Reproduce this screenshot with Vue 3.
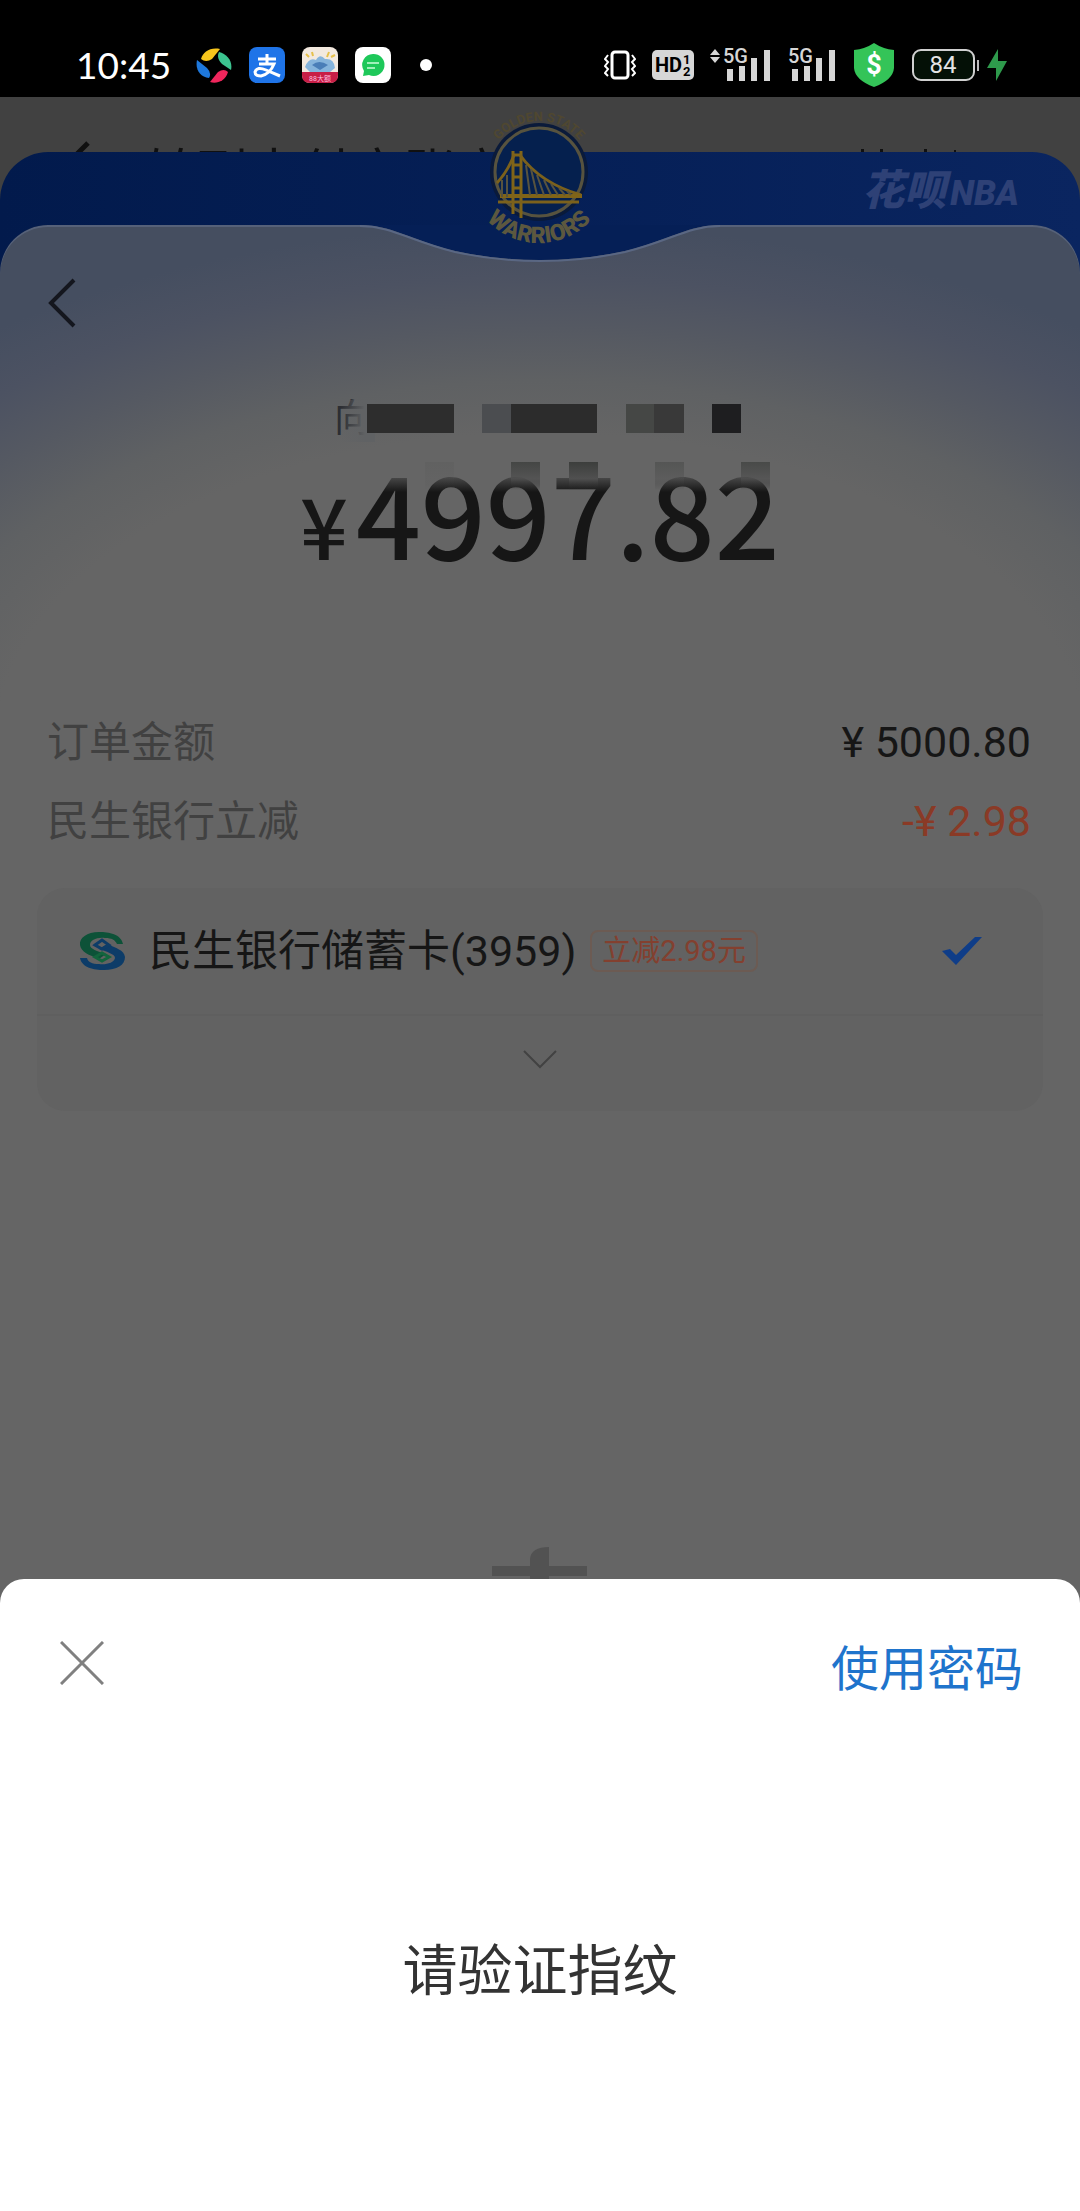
<template>
  <div class="screen">
    <header class="status">
      <div class="status-left">
        <span class="time">10:45</span>
        <svg class="app-icon" viewBox="0 0 36 36">
          <path d="M5 12C7 5 14 0 24 2L16 12Q10 16 5 12Z" fill="#f8c61c" />
          <path d="M23 5C31 7 37 14 35 23L26 17Q20 11 23 5Z" fill="#3cc490" />
          <path d="M14 35C20 37 29 35 32 25Q28 21 22 25Z" fill="#f0265c" />
          <path d="M1 13C-1 22 4 30 13 31Q16 26 11 21Z" fill="#1e78dc" />
        </svg>
        <svg class="app-icon" viewBox="0 0 36 36">
          <rect width="36" height="36" rx="8" fill="#1f74e8" />
          <path d="M9 12H27M18 7V16M10 17H25Q21 27 12 29Q6 29 6 25Q8 19 17 23L31 29" fill="none" stroke="#fff" stroke-width="3" />
        </svg>
        <svg class="app-icon" viewBox="0 0 36 36">
          <rect width="36" height="36" rx="8" fill="#f3e9df" />
          <path d="M4 7l3 3M10 5l1 4M27 5l-2 5M33 8l-4 2" stroke="#e6c04a" stroke-width="2" />
          <path d="M3 20Q7 10 14 13Q18 6 23 12Q32 11 33 21L28 25H8Z" fill="#86b4dc" />
          <path d="M10 18Q17 12 26 18L18 23Z" fill="#4a7eb8" />
          <path d="M0 25H36V28Q36 36 28 36H8Q0 36 0 28Z" fill="#c81e46" />
          <text x="18" y="34" font-size="7" text-anchor="middle" fill="#fbd">88大额</text>
        </svg>
        <svg class="app-icon" viewBox="0 0 36 36">
          <rect width="36" height="36" rx="8" fill="#fff" />
          <path d="M18 7a11 11 0 1 1-4 21l-6 1 1-5A11 11 0 0 1 18 7Z" fill="#1ec85a" />
          <path d="M12 16H24M12 21H20" stroke="#9ff0ba" stroke-width="2" />
        </svg>
        <i class="dot"></i>
      </div>
      <div class="status-right">
        <svg width="32" height="30" viewBox="0 0 32 30">
          <rect x="8" y="2" width="16" height="26" rx="3" fill="none" stroke="#fff" stroke-width="3" />
          <path d="M4 5L1 9L4 12L1 16L4 19L1 23L4 26M28 5L31 9L28 12L31 16L28 19L31 23L28 26" fill="none" stroke="#fff" stroke-width="2" />
        </svg>
        <svg class="hd" width="42" height="30" viewBox="0 0 42 30">
          <rect width="42" height="30" rx="5" fill="#d6d6d6" />
          <text x="3" y="22" font-size="20" font-weight="700">HD</text>
          <text x="31" y="14" font-size="13" font-weight="700">1</text>
          <text x="31" y="26" font-size="13" font-weight="700">2</text>
        </svg>
        <svg v-for="s in signals" :key="s.id" class="signal" :width="s.arrows ? 62 : 49" height="36" :viewBox="s.arrows ? '0 0 62 36' : '13 0 49 36'">
          <path v-if="s.arrows" d="M0 8L5 2L10 8ZM0 10L5 16L10 10Z" fill="#d6d6d6" />
          <text x="13" y="16" font-size="20" font-weight="500" fill="#d6d6d6">5G</text>
          <path d="M17 22h6v12h-6zM29 19h6v15h-6zM41 11h6v23h-6zM54 3h6v31h-6z" fill="#d6d6d6" />
        </svg>
        <svg width="42" height="44" viewBox="0 0 42 44">
          <path d="M21 0Q30 6 41 7V25Q40 37 21 44Q2 37 1 25V7Q12 6 21 0Z" fill="#34c458" />
          <text x="21" y="31" font-size="27" font-weight="700" text-anchor="middle" fill="#fff">$</text>
        </svg>
        <svg width="98" height="34" viewBox="0 0 98 34">
          <rect x="2" y="2" width="61" height="30" rx="8" fill="#041006" stroke="#d0d0d0" stroke-width="2" />
          <path d="M67 12V23" stroke="#bbb" stroke-width="2" />
          <text x="32" y="25" font-size="24" text-anchor="middle" fill="#e4e4e4">84</text>
          <path d="M87 1L76 20H85V33L96 13H87Z" fill="#2e9a4c" />
        </svg>
      </div>
    </header>

    <div class="backdrop">
      <div class="nav">
        <svg class="nav-back" width="24" height="44" viewBox="0 0 24 44">
          <path d="M22 2L2 22L22 42" fill="none" stroke="#101010" stroke-width="5" />
        </svg>
        <span class="nav-title">转到支付宝账户</span>
        <svg class="nav-more" width="100" height="4" viewBox="0 0 100 4">
          <path d="M1 1h3v3H1zM20 1h3v3h-3zM64 1h3v3h-3zM94 2h2v2h-2z" fill="#101010" />
        </svg>
      </div>

      <main class="panel">
        <div class="banner">
          <svg class="team" width="120" height="144" viewBox="0 0 120 144">
            <defs>
              <path id="arcTop" d="M8 67A51 51 0 0 1 110 67" />
              <path id="arcBottom" d="M-12 67A71 71 0 0 0 130 67" />
            </defs>
            <text class="team-top" font-size="13">
              <textPath href="#arcTop" startOffset="50%" text-anchor="middle">GOLDEN STATE</textPath>
            </text>
            <circle cx="59" cy="67" r="49" fill="#0a1a3a" />
            <circle cx="59" cy="67" r="44" fill="#05204e" stroke="#57533f" stroke-width="3" />
            <path d="M33 46V109M41 46V113M33 50H41M33 60H41M33 72H41M33 83H41" stroke="#806418" stroke-width="3" fill="none" />
            <path d="M17 78Q28 66 34 50M40 50Q60 78 101 90M18 97H99" stroke="#7b611c" stroke-width="3" fill="none" />
            <path d="M20 91H102" stroke="#806418" stroke-width="4" />
            <path d="M22 75V92M27 70V92M46 60L50 90M51 64L57 90M57 70L64 90M64 75L71 90M71 79L78 90M79 83L85 90M87 86L91 90" stroke="#57533f" stroke-width="2" />
            <text class="team-name" font-size="23">
              <textPath href="#arcBottom" startOffset="50%" text-anchor="middle">WARRIORS</textPath>
            </text>
          </svg>
          <span class="brand">花呗<b>NBA</b></span>
        </div>

        <section class="body">
          <svg class="notch" width="360" height="38" viewBox="0 0 360 38">
            <path d="M0 0C32 0 50 15 95 26C150 38 210 38 265 26C310 15 328 0 360 0Z" fill="#051f56" />
            <path d="M0 1C32 1 50 16 95 27C150 39 210 39 265 27C310 16 328 1 360 1" fill="none" stroke="#5a6783" stroke-width="2" />
          </svg>
          <button class="back" aria-label="返回">
            <svg width="28" height="50" viewBox="0 0 28 50">
              <path d="M26 2L3 25L26 48" fill="none" stroke="#14161e" stroke-width="4" />
            </svg>
          </button>

          <div class="summary">
            <div class="payee">向</div>
            <div class="amount"><span class="yen">¥</span>4997.82</div>
            <svg class="mosaic" width="440" height="100" viewBox="0 0 440 100">
              <defs>
                <linearGradient id="fadeX">
                  <stop offset="0" stop-color="#606264" stop-opacity="0" />
                  <stop offset="1" stop-color="#606264" />
                </linearGradient>
                <linearGradient id="fadeY" x2="0" y2="1">
                  <stop offset="0" stop-color="#656565" stop-opacity="0.7" />
                  <stop offset="1" stop-color="#656565" stop-opacity="0" />
                </linearGradient>
                <linearGradient id="tile" x2="0" y2="1">
                  <stop offset="0" stop-color="#3c3e3c" />
                  <stop offset="0.6" stop-color="#505050" />
                  <stop offset="1" stop-color="#202020" stop-opacity="0" />
                </linearGradient>
              </defs>
              <rect x="5" y="0" width="24" height="42" fill="url(#fadeX)" />
              <rect x="29" y="0" width="10" height="42" fill="#606264" />
              <rect x="15" y="76" width="425" height="16" fill="url(#fadeY)" />
              <rect v-for="t in tiles" :key="t.x" :x="t.x" y="4" :width="t.w" height="29" :fill="t.fill" />
              <rect v-for="t in fades" :key="t.x" :x="t.x" y="62" width="29" height="28" fill="url(#tile)" :opacity="t.opacity" />
            </svg>
          </div>

          <dl class="rows">
            <div v-for="row in rows" :key="row.label" class="row">
              <dt>{{ row.label }}</dt>
              <dd :class="{ discount: row.discount }">{{ row.value }}</dd>
            </div>
          </dl>

          <div class="card">
            <div class="card-main">
              <svg class="bank" width="46" height="38" viewBox="0 0 46 38">
                <path d="M44 12C42 2 30 0 20 0C8 0 0 6 1 13C2 20 10 23 20 27L27 22C18 19 11 17 11 13C11 8 18 5 26 6C33 6 36 8 38 12Z" fill="#0d5238" />
                <path d="M1 26C3 36 15 38 25 38C38 38 46 33 46 25C45 18 37 16 28 12L20 17C28 20 36 22 36 26C35 31 27 33 20 32C13 32 9 30 8 26Z" fill="#0d3c68" />
                <path d="M16 13L23 8L30 13L23 17Z" fill="none" stroke="#0d3c68" stroke-width="3" />
                <path d="M16 25L23 21L30 25L23 29Z" fill="none" stroke="#13653d" stroke-width="3" />
              </svg>
              <span class="bank-name">民生银行储蓄卡(3959)</span>
              <span class="tag">立减2.98元</span>
              <svg class="check" width="40" height="28" viewBox="0 0 40 28">
                <path d="M0 14L8 12L14 18L33 0H40L14 28Z" fill="#0f3d88" />
              </svg>
            </div>
            <button class="more" aria-label="展开">
              <svg width="34" height="20" viewBox="0 0 34 20">
                <path d="M1 1L17 17L33 1" fill="none" stroke="#424242" stroke-width="2" />
              </svg>
            </button>
          </div>

          <svg class="watermark" width="96" height="32" viewBox="0 0 96 32">
            <path d="M38 32V12Q39 0 57 0V32ZM0 19H95V29H0Z" fill="#525252" />
          </svg>
        </section>
      </main>
    </div>

    <section class="sheet">
      <div class="sheet-bar">
        <button class="close" aria-label="关闭">
          <svg width="44" height="44" viewBox="0 0 44 44">
            <path d="M1 1L43 43M43 1L1 43" stroke="#808080" stroke-width="3" />
          </svg>
        </button>
        <a class="use-password" href="#">使用密码</a>
      </div>
      <h1 class="prompt">请验证指纹</h1>
    </section>
  </div>
</template>

<script setup>
const signals = [
  { id: 1, arrows: true },
  { id: 2, arrows: false },
];

const rows = [
  { label: "订单金额", value: "¥ 5000.80", discount: false },
  { label: "民生银行立减", value: "-¥ 2.98", discount: true },
];

// 收款人马赛克
const tiles = [
  { x: 31, w: 87, fill: "#2d2d2d" },
  { x: 146, w: 29, fill: "#4b4d50" },
  { x: 175, w: 86, fill: "#2c2c2c" },
  { x: 290, w: 28, fill: "#454745" },
  { x: 318, w: 30, fill: "#393939" },
  { x: 376, w: 29, fill: "#1e1e20" },
];

const fades = [
  { x: 89, opacity: 0.1 },
  { x: 175, opacity: 0.8 },
  { x: 233, opacity: 1 },
  { x: 319, opacity: 0.4 },
  { x: 405, opacity: 0.7 },
];
</script>

<style>
body {
  margin: 0;
}
</style>

<style scoped>
.screen {
  min-height: 100vh;
  display: flex;
  flex-direction: column;
  background: #656565;
  font-family: Roboto, "Noto Sans CJK SC", sans-serif;
  color: #161616;
}

button {
  padding: 0;
  border: none;
  background: none;
  cursor: pointer;
}

svg {
  display: block;
  flex-shrink: 0;
}

/* 状态栏 */
.status {
  box-sizing: border-box;
  height: 97px;
  padding: 32px 71px 0 76px;
  display: flex;
  align-items: center;
  justify-content: space-between;
  background: #000;
}

.status-left,
.status-right {
  display: flex;
  align-items: center;
  gap: 17px;
}

.status-right {
  gap: 16px;
}

.time {
  margin-right: 8px;
  font-family: Lato, sans-serif;
  font-size: 37px;
  color: #fff;
}

.app-icon {
  width: 36px;
  height: 36px;
}

.dot {
  width: 12px;
  height: 12px;
  margin-left: 12px;
  border-radius: 50%;
  background: #fff;
}

.signal {
  overflow: visible;
}

/* 底层页面 */
.backdrop {
  flex: 1;
  display: flex;
  flex-direction: column;
  background: #414141;
}

.nav {
  height: 55px;
  padding: 0 120px 0 66px;
  display: flex;
  align-items: flex-start;
  overflow: hidden;
}

.nav-back {
  margin-top: 44px;
}

.nav-title {
  flex: 1;
  margin: 48px 0 0 54px;
  font-size: 52px;
  line-height: 60px;
  color: #101010;
}

.nav-more {
  margin-top: 51px;
}

.panel {
  flex: 1;
  display: flex;
  flex-direction: column;
  border-radius: 48px 48px 0 0;
  background: linear-gradient(90deg, #021a4c, #051f56 50%, #0a2560);
}

.banner {
  position: relative;
  height: 73px;
  padding: 0 61px;
  display: flex;
  align-items: center;
  justify-content: flex-end;
}

.team {
  position: absolute;
  left: 50%;
  top: -47px;
  margin-left: -60px;
  z-index: 2;
  overflow: visible;
}

.team-top {
  fill: #4f4730;
  font-weight: 700;
}

.team-name {
  fill: #5c583f;
  font-weight: 900;
}

.brand {
  padding-top: 8px;
  font-size: 42px;
  font-weight: 900;
  font-style: italic;
  line-height: 48px;
  color: #2e4176;
}

.brand b {
  margin-left: 4px;
  font-size: 35px;
}

.body {
  position: relative;
  flex: 1;
  display: flex;
  flex-direction: column;
  border-radius: 48px 48px 0 0;
  background: radial-gradient(84% 520px at 50% 520px, #656565 60%, #5f6163 70%, #555962 80%, #4c5262 90%, #454e60 100%) no-repeat 0 0 / 100% 520px #656565;
  box-shadow: inset 0 2px 0 #566179;
}

.notch {
  position: absolute;
  top: 0;
  left: 50%;
  margin-left: -180px;
}

.back {
  align-self: flex-start;
  margin: 53px 0 0 48px;
}

.summary {
  position: relative;
  width: 480px;
  margin: 64px auto 0;
}

.payee {
  padding-left: 34px;
  font-size: 38px;
  line-height: 52px;
  color: #2c2e33;
}

.amount {
  font-family: "Noto Sans CJK SC", sans-serif;
  font-size: 114px;
  font-weight: 500;
  line-height: 134px;
  white-space: nowrap;
  color: #161616;
}

.yen {
  margin-right: 8px;
  font-size: 84px;
}

.mosaic {
  position: absolute;
  left: 36px;
  top: 8px;
}

.rows {
  margin: 112px 49px 27px 47px;
  font-size: 42px;
}

.row {
  display: flex;
  justify-content: space-between;
  line-height: 79px;
}

.row dt {
  color: #414141;
}

.row dd {
  margin: 0;
  font-size: 43px;
}

.row .discount {
  color: #8a3a26;
}

.card {
  margin: 0 37px;
  border-radius: 28px;
  background: #626262;
}

.card-main {
  height: 126px;
  padding: 0 61px 0 42px;
  display: flex;
  align-items: center;
  border-bottom: 2px solid #5f5f5f;
}

.bank-name {
  margin-left: 24px;
  font-size: 43px;
  line-height: 60px;
}

.tag {
  margin-left: 14px;
  padding: 0 10px;
  border: 2px solid #6c5b53;
  border-radius: 8px;
  font-size: 29px;
  line-height: 38px;
  color: #83402f;
}

.check {
  margin-left: auto;
}

.more {
  width: 100%;
  height: 95px;
  padding-bottom: 8px;
  display: flex;
  align-items: center;
  justify-content: center;
}

.watermark {
  margin: auto auto 0;
}

/* 指纹验证弹层 */
.sheet {
  min-height: 632px;
  border-radius: 24px 24px 0 0;
  background: #fff;
}

.sheet-bar {
  height: 182px;
  padding: 0 57px 0 60px;
  display: flex;
  align-items: center;
  justify-content: space-between;
}

.close {
  padding-bottom: 14px;
}

.use-password {
  font-size: 48px;
  line-height: 64px;
  color: #1f74cc;
  text-decoration: none;
}

.prompt {
  margin: 171px 0 0;
  font-size: 55px;
  font-weight: 400;
  line-height: 78px;
  text-align: center;
  color: #333;
}
</style>
